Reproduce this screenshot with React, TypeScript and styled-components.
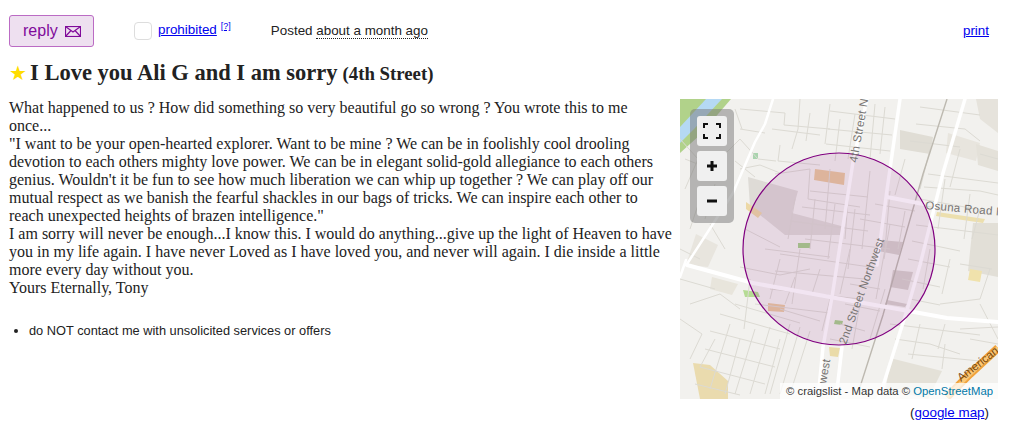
import React from 'react';
import styled, { createGlobalStyle } from 'styled-components';

const GlobalStyle = createGlobalStyle`
  html, body {
    margin: 0;
    padding: 0;
    background: #fff;
  }
  body {
    font-family: "Liberation Serif", "Times New Roman", serif;
    color: #222;
  }
  a {
    color: #00e;
  }
`;

const Page = styled.div`
  width: 1009px;
  height: 433px;
  padding: 15px 11px 0 9px;
  box-sizing: border-box;
  overflow: hidden;
`;

const TopBar = styled.div`
  display: flex;
  align-items: center;
  height: 32px;
  font-family: "Liberation Sans", Arial, sans-serif;
  font-size: 13.4px;
`;

const ReplyButton = styled.button`
  display: flex;
  align-items: center;
  gap: 7px;
  width: 85px;
  height: 32px;
  padding: 0 0 0 13px;
  box-sizing: border-box;
  background: #eee0f0;
  border: 1px solid #bb6bc4;
  border-radius: 3px;
  color: #800a9a;
  font-family: "Liberation Sans", Arial, sans-serif;
  font-size: 16px;
`;

const FlagBox = styled.span`
  width: 18px;
  height: 18px;
  margin-left: 40px;
  box-sizing: border-box;
  border: 1px solid #ddd;
  border-radius: 4px;
  background: #fff;
`;

const ProhibitedLink = styled.a`
  margin-left: 6px;
  margin-top: -3px;
`;

const Help = styled.sup`
  align-self: flex-start;
  margin: 6px 0 0 4px;
  font-size: 9px;
  line-height: 11px;
  color: #00e;
  text-decoration: underline;
`;

const Posted = styled.span`
  margin-left: 40px;
  margin-top: -2px;
  color: #222;
`;

const TimeAgo = styled.span`
  border-bottom: 1px dotted #222;
`;

const PrintLink = styled.a`
  margin-left: auto;
  margin-right: 9px;
  margin-top: -2px;
`;

const Title = styled.h1`
  display: flex;
  align-items: baseline;
  margin: 13px 0 0;
  height: 26px;
  font-size: 22.5px;
  line-height: 26px;
  font-weight: bold;
  color: #222;
`;

const Star = styled.span`
  width: 21px;
  flex: none;
  color: #fd0;
  font-family: "DejaVu Sans", sans-serif;
  font-size: 20px;
  line-height: 20px;
`;

const Area = styled.small`
  margin-left: 5px;
  font-size: 18.8px;
`;

const Body = styled.div`
  display: flex;
  justify-content: space-between;
  margin-top: 13px;
`;

const Left = styled.div`
  width: 671px;
`;

const PostText = styled.section`
  font-size: 16px;
  line-height: 18px;
  color: #222;
`;

const Notices = styled.ul`
  margin: 25px 0 0;
  padding: 0 0 0 20px;
  font-family: "Liberation Sans", Arial, sans-serif;
  font-size: 12.8px;
  line-height: 18px;
`;

const Right = styled.aside`
  width: 318px;
  flex: none;
`;

const MapBox = styled.div`
  position: relative;
  width: 318px;
  height: 300px;
  overflow: hidden;
  background: #f2f1ee;
`;

const MapSvg = styled.svg`
  display: block;
`;

const Controls = styled.div`
  position: absolute;
  left: 10px;
  top: 10px;
  display: flex;
  flex-direction: column;
  gap: 5px;
  padding: 7px 7px;
  background: rgba(120, 120, 120, 0.5);
  border-radius: 5px;
`;

const ControlButton = styled.button`
  display: flex;
  align-items: center;
  justify-content: center;
  width: 30px;
  height: 30px;
  padding: 0;
  border: none;
  border-radius: 3px;
  background: #f0f0f0;
`;

const Attribution = styled.div`
  position: absolute;
  right: 0;
  bottom: 0;
  padding: 0 5px 0 6px;
  height: 16px;
  font-family: "Liberation Sans", Arial, sans-serif;
  font-size: 11.3px;
  line-height: 16px;
  color: #333;
  background: rgba(255, 255, 255, 0.75);
  white-space: nowrap;
`;

const OsmLink = styled.span`
  color: #0078a8;
`;

const MapLinkRow = styled.div`
  margin-top: 6px;
  padding-right: 9px;
  text-align: right;
  font-family: "Liberation Sans", Arial, sans-serif;
  font-size: 13.4px;
  line-height: 16px;
`;

// minor streets, in map coordinates
const minorStreets = [
  'M60 10 L105 14 L104 26 L150 30', 'M120 0 L118 30 L112 50', 'M150 12 L215 20', 'M148 30 L212 36',
  'M146 45 L210 52', 'M92 30 L140 36', 'M100 46 L98 62 L140 66', 'M175 15 L168 60', 'M195 5 L190 60',
  'M240 8 L300 16', 'M236 25 L285 30 L300 42', 'M230 42 L280 48', 'M248 75 L318 84', 'M244 88 L300 92',
  'M240 100 L296 110', 'M236 126 L318 136', 'M265 80 L258 130', 'M290 95 L284 140', 'M232 142 L280 152',
  'M228 160 L270 168', 'M222 180 L260 188', 'M40 60 L60 40 L78 60 L96 62', 'M60 70 L80 66 L100 74',
  'M95 75 L130 70 L128 100 L180 108', 'M130 92 L188 98', 'M122 108 L190 116', 'M150 70 L145 130',
  'M170 76 L165 140', 'M190 72 L182 150', 'M210 92 L205 150 L196 200', 'M125 140 L210 150',
  'M100 155 L190 168', 'M95 172 L185 180', 'M60 168 L100 176 L130 170', 'M90 190 L180 200',
  'M75 205 L150 214', 'M120 150 L112 205', 'M100 160 L90 200', 'M70 180 L64 230', 'M55 205 L120 224',
  'M40 215 L110 235', 'M30 232 L100 250', 'M25 250 L95 268', 'M20 268 L85 285', 'M15 285 L60 296',
  'M110 225 L90 295', 'M130 232 L110 295', 'M75 230 L55 295', 'M50 225 L30 290', 'M10 205 L40 195 L60 210',
  'M150 240 L190 248', 'M0 220 L22 235 L10 260', 'M0 180 L35 190', 'M0 150 L20 160',
  'M210 225 L300 236', 'M215 240 L250 245 L280 255', 'M260 205 L300 200 L310 170', 'M280 165 L312 170',
  'M265 245 L262 270', 'M228 255 L300 262', 'M300 205 L318 240', 'M280 230 L318 228',
  'M180 205 L172 250', 'M205 190 L190 240', 'M150 200 L142 232', 'M170 150 L160 195', 'M215 100 L260 110',
  'M225 60 L215 96', 'M300 55 L318 60', 'M0 40 L18 60 L5 90', 'M20 100 L10 130', 'M30 125 L45 150',
  'M100 240 L85 295', 'M120 228 L100 295', 'M60 240 L45 295', 'M90 228 L70 295', 'M35 240 L20 268',
  'M60 30 L85 34', 'M55 62 L75 78', 'M150 5 L145 45', 'M130 14 L126 42', 'M205 8 L200 55', 'M160 20 L155 62',
  'M115 100 L108 140', 'M135 100 L130 150', 'M155 105 L148 160', 'M175 110 L168 170', 'M110 122 L188 132',
  'M85 150 L150 158', 'M65 130 L100 148', 'M140 170 L132 195', 'M115 178 L105 205', 'M100 210 L140 222',
  'M180 120 L225 128', 'M195 105 L235 112', 'M210 125 L204 160', 'M225 112 L218 150', 'M170 185 L200 190',
  'M165 205 L200 212', 'M160 225 L185 232', 'M250 50 L240 90', 'M280 50 L270 88', 'M300 92 L318 96',
  'M300 110 L292 140', 'M250 150 L243 190', 'M270 160 L262 195', 'M230 200 L260 206', 'M240 225 L232 260',
  'M265 225 L258 250', 'M290 240 L318 245', 'M5 60 L30 70', 'M35 85 L25 120', 'M55 10 L62 30',
];

const MapDrawing = () => (
  <MapSvg width="318" height="300" viewBox="0 0 318 300">
    <rect width="318" height="300" fill="#f2f1ee" />
    {/* river and banks */}
    <path d="M0 0 L51 0 L20 36 L0 54 Z" fill="#b1d28a" />
    <path d="M0 28 L26 0 L42 0 L14 30 L0 44 Z" fill="#b5d9f4" />
    {/* land use */}
    <path d="M135 70 L165 74 L164 86 L134 81 Z" fill="#e8c9a0" />
    <path d="M68 78 L118 92 L112 114 L165 128 L160 136 L105 136 L70 108 Z" fill="#dedbd6" />
    <path d="M66 103 L82 114 L78 119 L66 110 Z" fill="#ecd8a6" />
    <path d="M73 54 L78 54 L78 60 L73 60 Z" fill="#a9d4ae" />
    <path d="M118 144 L130 144 L130 149 L118 149 Z" fill="#a8d08d" />
    <path d="M220 31 L253 38 L250 55 L220 50 Z" fill="#e0ddd5" />
    <path d="M16 135 L38 146 L28 168 L6 166 Z" fill="#e8e5de" />
    <path d="M296 0 L318 0 L318 34 L300 20 Z" fill="#e6e3dc" />
    <path d="M268 34 L300 44 L296 62 L266 54 Z" fill="#e8e5de" />
    <path d="M296 45 L318 52 L318 72 L298 66 Z" fill="#e4e1d9" />
    <path d="M293 124 L318 124 L318 178 L288 172 Z" fill="#e2dfd7" />
    <path d="M290 170 L302 172 L300 183 L288 181 Z" fill="#f0e2ac" />
    <path d="M32 178 L58 185 L52 196 L30 190 Z" fill="#e8e5dc" />
    <path d="M63 191 L78 193 L80 198 L65 198 Z" fill="#b5dc94" />
    <path d="M19 276 L38 280 L36 282 L19 279 Z" fill="#b5dc94" />
    <path d="M88 204 L105 206 L104 213 L88 212 Z" fill="#e8c9a0" />
    <path d="M149 248 L160 249 L158 258 L150 257 Z" fill="#eadba8" />
    <path d="M210 259 L262 272 L248 300 L206 290 Z" fill="#e4e1d8" />
    <path d="M13 264 L30 266 L48 282 L48 300 L20 300 Z" fill="#eadbae" />
    <path d="M200 141 L223 143 L219 156 L198 152 Z" fill="#d6d1cc" />
    <path d="M213 171 L233 173 L228 191 L210 188 Z" fill="#d6d1cc" />
    <path d="M207 201 L227 205 L225 208 L205 205 Z" fill="#d6d1cc" />
    <path d="M155 221 L163 222 L162 226 L154 225 Z" fill="#a8d08d" />
    <path d="M257 113 L305 120 L303 124 L256 117 Z" fill="#ecdfae" />
    {/* small streets */}
    {minorStreets.map((d, i) => (
      <path key={i} d={d} fill="none" stroke="#dcdad3" strokeWidth="1" />
    ))}
    {/* rail */}
    <path d="M267 0 L243 75 L217 166 L203 216 L180 288" fill="none" stroke="#bdb9b0" strokeWidth="1.4" />
    {/* highway */}
    <path d="M318 249 L290 275 L267 298" fill="none" stroke="#f0a33c" strokeWidth="8" />
    <path d="M318 249 L290 275 L267 298" fill="none" stroke="#fbc877" strokeWidth="4" />
    {/* main roads */}
    <g fill="none" stroke="#fff" strokeLinejoin="round" strokeLinecap="round">
      <path d="M93 0 L85 25 L75 43 L53 94 L7 165" strokeWidth="2.5" />
      <path d="M6 161 L0 178" strokeWidth="2.5" />
      <path d="M187 0 L173 63 L157 166 L152 198 L143 248 L138 300" strokeWidth="3.5" />
      <path d="M220 0 L207 91 L197 166" strokeWidth="3.5" />
      <path d="M162 248 L156 300" strokeWidth="3.5" />
      <path d="M285 0 L263 74 L240 166 L227 211 L203 287 L198 300" strokeWidth="3.5" />
      <path d="M7 166 L73 184 L150 198 L223 211 L267 219 L318 223" strokeWidth="4" />
      <path d="M207 98 L243 105" strokeWidth="4" />
    </g>
    {/* search radius */}
    <circle cx="159" cy="150" r="96" fill="#800080" fillOpacity="0.1" stroke="#800080" strokeWidth="1.2" />
    {/* street labels */}
    <g fontFamily="'Liberation Sans', Arial, sans-serif" fill="#777472" fontSize="11.5">
      <text transform="translate(177 64) rotate(-80)" letterSpacing="0.3">4th Street No</text>
      <text transform="translate(245 110) rotate(5)" letterSpacing="0.3">Osuna Road No</text>
      <text transform="translate(166 246) rotate(-70)" letterSpacing="0.2">2nd Street Northwest</text>
      <text transform="translate(146 285) rotate(-80)" letterSpacing="0.3">west</text>
    </g>
    <text
      transform="translate(281 283) rotate(-38)"
      fontFamily="'Liberation Sans', Arial, sans-serif"
      fontSize="11.5"
      fill="#7a4a10"
    >
      American
    </text>
  </MapSvg>
);

const FullscreenIcon = () => (
  <svg width="18" height="16" viewBox="0 0 18 16" fill="none" stroke="#111" strokeWidth="2">
    <path d="M1 5 V1 H5 M13 1 H17 V5 M17 11 V15 H13 M5 15 H1 V11" />
  </svg>
);

const MailIcon = () => (
  <svg width="16" height="11" viewBox="0 0 16 11" fill="none" stroke="#800a9a" strokeWidth="1.2">
    <rect x="0.5" y="0.5" width="15" height="10" />
    <path d="M0.5 0.5 L8 6 L15.5 0.5 M0.5 10.5 L6 4.5 M15.5 10.5 L10 4.5" />
  </svg>
);

const PlusIcon = () => (
  <svg width="10" height="10" viewBox="0 0 10 10" fill="#111">
    <path d="M3.5 0 H6.5 V3.5 H10 V6.5 H6.5 V10 H3.5 V6.5 H0 V3.5 H3.5 Z" />
  </svg>
);

const MinusIcon = () => (
  <svg width="10" height="4" viewBox="0 0 10 4" fill="#111">
    <rect width="10" height="3" y="0.5" />
  </svg>
);

export default function App() {
  return (
    <Page>
      <GlobalStyle />
      <TopBar>
        <ReplyButton>
          reply
          <MailIcon />
        </ReplyButton>
        <FlagBox />
        <ProhibitedLink href="#">prohibited</ProhibitedLink>
        <Help>[?]</Help>
        <Posted>
          Posted <TimeAgo>about a month ago</TimeAgo>
        </Posted>
        <PrintLink href="#">print</PrintLink>
      </TopBar>
      <Title>
        <Star>★</Star>
        I Love you Ali G and I am sorry
        <Area>(4th Street)</Area>
      </Title>
      <Body>
        <Left>
          <PostText>
            What happened to us ? How did something so very beautiful go so wrong ? You wrote this to me
            <br />
            once...
            <br />
            "I want to be your open-hearted explorer. Want to be mine ? We can be in foolishly cool drooling
            <br />
            devotion to each others mighty love power. We can be in elegant solid-gold allegiance to each others
            <br />
            genius. Wouldn't it be fun to see how much liberation we can whip up together ? We can play off our
            <br />
            mutual respect as we banish the fearful shackles in our bags of tricks. We can inspire each other to
            <br />
            reach unexpected heights of brazen intelligence."
            <br />
            I am sorry will never be enough...I know this. I would do anything...give up the light of Heaven to have
            <br />
            you in my life again. I have never Loved as I have loved you, and never will again. I die inside a little
            <br />
            more every day without you.
            <br />
            Yours Eternally, Tony
          </PostText>
          <Notices>
            <li>do NOT contact me with unsolicited services or offers</li>
          </Notices>
        </Left>
        <Right>
          <MapBox>
            <MapDrawing />
            <Controls>
              <ControlButton aria-label="fullscreen">
                <FullscreenIcon />
              </ControlButton>
              <ControlButton aria-label="zoom in">
                <PlusIcon />
              </ControlButton>
              <ControlButton aria-label="zoom out">
                <MinusIcon />
              </ControlButton>
            </Controls>
            <Attribution>
              © craigslist - Map data © <OsmLink>OpenStreetMap</OsmLink>
            </Attribution>
          </MapBox>
          <MapLinkRow>
            (<a href="#">google map</a>)
          </MapLinkRow>
        </Right>
      </Body>
    </Page>
  );
}
